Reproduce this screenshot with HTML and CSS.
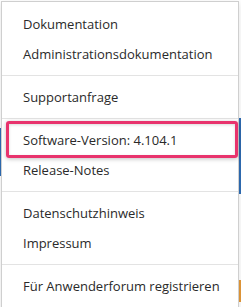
FILE: index.html
```html
<!DOCTYPE html>
<html lang="de">
<head>
<meta charset="utf-8">
<link rel="stylesheet" href="styles.css">
</head>
<body>
<div class="page">
  <span class="bg bg-left"></span>
  <span class="bg bg-right"></span>
  <span class="bg bg-right-orange"></span>
  <ul class="menu">
    <li class="item">Dokumentation</li>
    <li class="item">Administrationsdokumentation</li>
    <li class="sep"></li>
    <li class="item">Supportanfrage</li>
    <li class="sep"></li>
    <li class="item highlighted">Software-Version: 4.104.1</li>
    <li class="item">Release-Notes</li>
    <li class="sep"></li>
    <li class="item">Datenschutzhinweis</li>
    <li class="item">Impressum</li>
    <li class="sep"></li>
    <li class="item">Für Anwenderforum registrieren</li>
  </ul>
</div>
</body>
</html>
```

FILE: styles.css
```css
* { box-sizing: border-box; }
html, body { margin: 0; padding: 0; background: #ffffff; }
.page {
  position: relative;
  width: 241px;
  height: 307px;
  overflow: hidden;
  font-family: "Open Sans", "Noto Sans", sans-serif;
}
.bg { position: absolute; }
.bg-left { left: 0; top: 128px; width: 2px; height: 48px; background: #2f6db5; }
.bg-right { right: 0; top: 118px; width: 2px; height: 76px; background: #2f6db5; }
.bg-right-orange { right: 0; top: 280px; width: 2px; height: 22px; background: #e59a3a; }
.menu {
  position: relative;
  list-style: none;
  margin: 1px 2px 0 1px;
  padding: 7px 0 8px 0;
  background: #ffffff;
  border: 1px solid #cfcfcf;
  box-shadow: 0 2px 6px rgba(0,0,0,0.12);
}
.item {
  height: 30px;
  line-height: 30px;
  padding-left: 21px;
  font-size: 13px;
  color: #2a2a2a;
  white-space: nowrap;
}
.sep {
  height: 1px;
  margin: 6px 0 6px;
  background: #e3e3e3;
}
.highlighted { position: relative; }
.highlighted::after {
  content: "";
  position: absolute;
  left: 4px;
  right: 0px;
  top: -4px;
  bottom: -3px;
  border: 3px solid #e8336d;
  border-radius: 3px;
  box-shadow: 0 1px 4px rgba(0,0,0,0.25), inset 0 1px 3px rgba(0,0,0,0.15);
}
```
